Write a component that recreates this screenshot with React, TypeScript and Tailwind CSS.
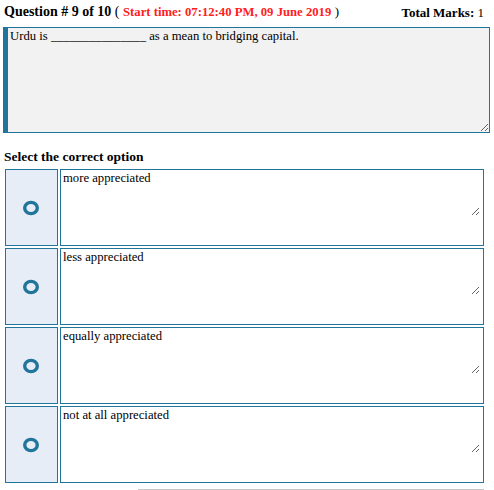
import React from 'react';

const options = ['more appreciated', 'less appreciated', 'equally appreciated', 'not at all appreciated'];

function RadioRing() {
  return (
    <svg width="18" height="16" viewBox="0 0 18 16" aria-hidden="true">
      <ellipse cx="9" cy="8" rx="6.3" ry="5.6" fill="none" stroke="#21759b" strokeWidth="3.4" />
    </svg>
  );
}

export default function App() {
  return (
    <div className="w-[494px] h-[490px] overflow-hidden bg-white text-[13px] leading-[15px] text-black font-['Liberation_Serif',serif]">
      {/* Header */}
      <div className="flex items-end justify-between pl-[4px] pr-[10px] pt-[7px] h-[20px]">
        <div className="font-bold text-[14px]">
          Question # 9 of 10 <span className="font-normal">(</span>{' '}
          <span className="text-[#ff2020] text-[12.7px]">Start time: 07:12:40 PM, 09 June 2019</span>{' '}
          <span className="font-normal text-[13px]">)</span>
        </div>
        <div>
          <span className="font-bold">Total Marks:</span> 1
        </div>
      </div>

      {/* Question */}
      <div className="mt-[7px] ml-[3px] mr-[4px] h-[106px] flex border border-l-[5px] border-[#21759b] bg-[#f2f2f2]">
        <textarea
          readOnly
          defaultValue="Urdu is _______________ as a mean to bridging capital."
          className="flex-1 bg-transparent pl-[2px] pt-[1px] pr-[2px] outline-none text-[12.7px] leading-[15px] font-['Liberation_Serif',serif]"
        />
      </div>

      <div className="mt-[16px] ml-[4px] font-bold text-[13.5px]">Select the correct option</div>

      {/* Options */}
      <div className="mt-[5px] ml-[5px] w-[479px] flex flex-col gap-[2px]">
        {options.map((o) => (
          <div key={o} className="flex gap-[2px] h-[77px]">
            <div className="w-[53px] shrink-0 border border-[#21759b] bg-[#e6edf7] flex items-center justify-center pr-[2px]">
              <RadioRing />
            </div>
            <div className="flex-1 border border-[#21759b] bg-white pr-[3px]">
              <textarea
                readOnly
                defaultValue={o}
                className="w-full h-[46px] block bg-transparent pl-[2px] pt-[1px] outline-none text-[12.7px] leading-[15px] font-['Liberation_Serif',serif]"
              />
            </div>
          </div>
        ))}
      </div>

      <div className="mt-[6px] ml-[138px] w-[346px] h-[2px] border-t border-[#c6c6c6] bg-[#efefef]" />
    </div>
  );
}
